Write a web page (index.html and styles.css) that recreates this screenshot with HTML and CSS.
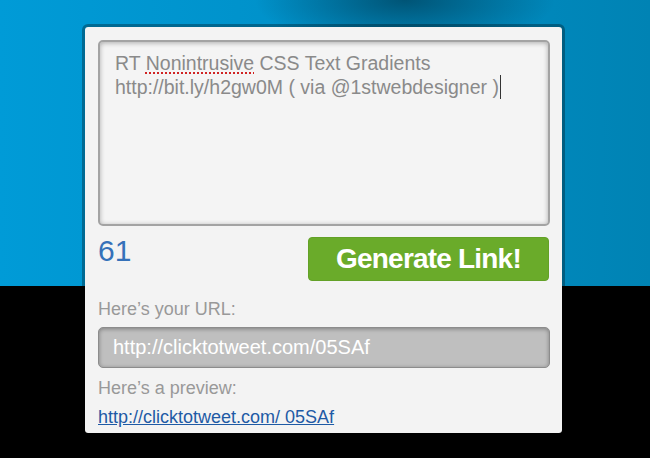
FILE: index.html
```html
<!DOCTYPE html>
<html lang="en">
<head>
    <meta charset="UTF-8">
    <title>Click to Tweet</title>
    <link rel="stylesheet" href="styles.css">
</head>
<body>
    <div class="card">
        <div class="tweet-box">
            RT <span class="misspelled">Nonintrusive</span> CSS Text Gradients<br>
            http://bit.ly/h2gw0M ( via @1stwebdesigner )<span class="caret"></span>
        </div>

        <div class="action-row">
            <span class="counter">61</span>
            <button class="generate">Generate Link!</button>
        </div>

        <p class="label">Here&rsquo;s your URL:</p>
        <div class="url-box">http://clicktotweet.com/05SAf</div>

        <p class="label">Here&rsquo;s a preview:</p>
        <a class="preview" href="#">http://clicktotweet.com/ 05SAf</a>
    </div>
</body>
</html>
```

FILE: styles.css
```css
html, body {
    margin: 0;
    height: 100%;
}
body {
    font-family: Arial, "Liberation Sans", sans-serif;
    background:
        radial-gradient(ellipse 150px 50px at 405px 0, rgba(0, 60, 85, 0.7), rgba(0, 60, 85, 0) 100%),
        linear-gradient(to bottom, transparent 286px, #000 286px),
        linear-gradient(to right, #009bd7, #0090c8 50%, #0083b4);
    background-color: #000;
    padding-top: 24px;
    box-sizing: border-box;
}
.card {
    width: 452px;
    margin-left: 82px;
    padding: 13px 12px 5px 13px;
    background: #f3f3f3;
    border: 3px solid rgba(0, 0, 0, 0.3);
    border-radius: 6px;
    background-clip: padding-box;
}
.tweet-box {
    height: 186px;
    padding: 9px 15px 0 15px;
    box-sizing: border-box;
    border: 2px solid #a3a3a3;
    border-radius: 5px;
    background: #f4f4f4;
    box-shadow: inset 0 1px 5px rgba(0, 0, 0, 0.3);
    color: #8a8a8a;
    font-size: 19.5px;
    line-height: 24px;
}
.misspelled {
    text-decoration: underline dotted #d02020;
    text-underline-offset: 3px;
}
.caret {
    display: inline-block;
    width: 1px;
    height: 24px;
    background: #333;
    vertical-align: top;
    margin-left: 1px;
}
.action-row {
    display: flex;
    justify-content: space-between;
    align-items: flex-start;
    margin-top: 11px;
}
.counter {
    color: #3571b9;
    font-size: 30px;
    line-height: 30px;
    margin-top: -1px;
}
.generate {
    width: 241px;
    height: 44px;
    margin-right: 1px;
    padding: 0;
    border: 1px solid #63a127;
    border-radius: 4px;
    background: #6aab2a;
    color: #fff;
    font-family: Arial, "Liberation Sans", sans-serif;
    font-weight: bold;
    font-size: 28px;
    letter-spacing: -0.8px;
    cursor: pointer;
}
.label {
    margin: 17px 0 7px;
    color: #999;
    font-size: 18px;
    line-height: 22px;
}
.url-box + .label {
    margin-top: 9px;
    margin-bottom: 7px;
}
.url-box {
    display: flex;
    align-items: center;
    height: 41px;
    padding-left: 14px;
    box-sizing: border-box;
    border: 1px solid #8c8c8c;
    border-radius: 5px;
    background: #bfbfbf;
    box-shadow: inset 0 1px 4px rgba(0, 0, 0, 0.35);
    color: #fff;
    font-size: 20px;
}
.preview {
    display: block;
    color: #1e5aa5;
    font-size: 18px;
    line-height: 22px;
}
```
